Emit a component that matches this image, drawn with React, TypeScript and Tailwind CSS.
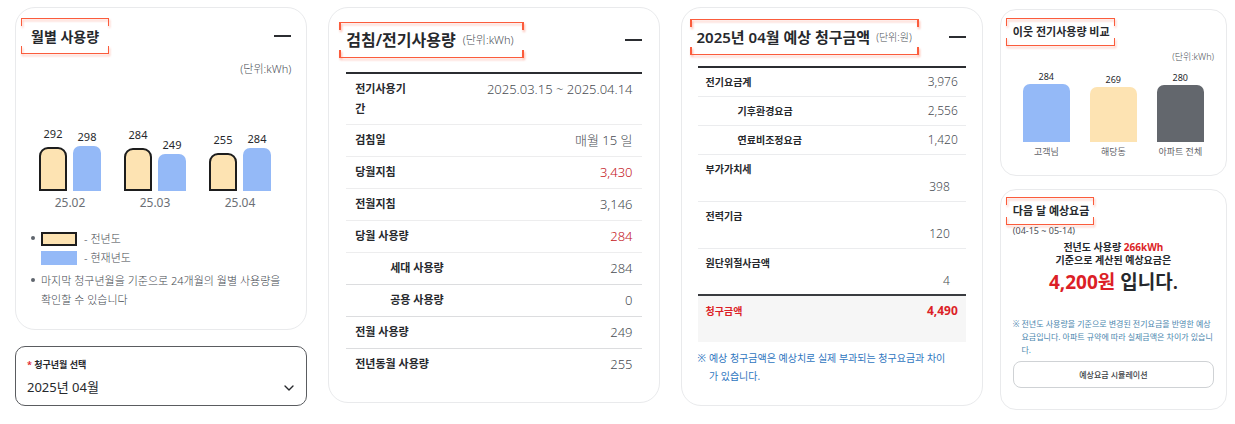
import type { ReactNode } from "react"
import { useState } from "react"
import { ChevronDown } from "lucide-react"
import clsx from "clsx"

const monthly = [
  { month: "25.02", previous: 292, current: 298 },
  { month: "25.03", previous: 284, current: 249 },
  { month: "25.04", previous: 255, current: 284 },
]

const readings = [
  { label: "전기사용기간", value: "2025.03.15 ~ 2025.04.14" },
  { label: "검침일", value: "매월 15 일" },
  { label: "당월지침", value: "3,430", red: true },
  { label: "전월지침", value: "3,146" },
  { label: "당월 사용량", value: "284", red: true },
  { label: "세대 사용량", value: "284", indent: true, strong: true },
  { label: "공용 사용량", value: "0", indent: true, strong: true },
  { label: "전월 사용량", value: "249", strong: true },
  { label: "전년동월 사용량", value: "255" },
]

const charges = [
  { label: "전기요금계", value: "3,976" },
  { label: "기후환경요금", value: "2,556", indent: true },
  { label: "연료비조정요금", value: "1,420", indent: true },
  { label: "부가가치세", value: "398", tall: true },
  { label: "전력기금", value: "120", tall: true },
  { label: "원단위절사금액", value: "4", tall: true },
]

const neighbors = [
  { label: "고객님", value: 284, height: 58, color: "bg-[#94b9f7]" },
  { label: "해당동", value: 269, height: 55, color: "bg-[#fde3b2]" },
  { label: "아파트 전체", value: 280, height: 57, color: "bg-[#63676d]" },
]

function Card({ className, children }: { className?: string; children: ReactNode }) {
  return <section className={clsx("border border-[#e9eaec] bg-white", className)}>{children}</section>
}

// Title with the red corner brackets
function Bracket({ className, thick, children }: { className?: string; thick?: boolean; children: ReactNode }) {
  const side = thick ? "border-x-2" : "border-x"
  return (
    <div className={clsx("relative flex items-center whitespace-nowrap", className)}>
      <span
        className={clsx("absolute inset-x-0 top-0 h-2 border-t border-[#fb5c3c] drop-shadow-[1px_2px_1px_rgba(251,92,60,0.45)]", side)}
      />
      {children}
      <span
        className={clsx("absolute inset-x-0 bottom-0 h-2 border-b border-[#fb5c3c] drop-shadow-[1px_2px_1px_rgba(251,92,60,0.45)]", side)}
      />
    </div>
  )
}

function CollapseButton() {
  return (
    <button type="button" aria-label="접기" className="flex h-5 w-[17px] items-center">
      <span className="h-[2px] w-full bg-[#2b2d31]" />
    </button>
  )
}

function MonthlyUsage() {
  return (
    <Card className="h-[323px] rounded-[20px] pl-[5px] pr-[15px] pt-[10px]">
      <div className="flex items-center justify-between">
        <Bracket className="h-9 px-[10px]">
          <h2 className="text-[14px] font-semibold">월별 사용량</h2>
        </Bracket>
        <CollapseButton />
      </div>
      <p className="mt-[7px] text-right text-[11px] leading-4 font-light text-[#4b4f56]">(단위:kWh)</p>

      <div className="mt-[47px] ml-[18px] flex h-[67px] gap-[23px]">
        {monthly.map((m) => (
          <div key={m.month} className="flex items-end gap-[6px]">
            <div className="flex w-7 flex-col items-center">
              <span className="mb-[5px] text-[11px] leading-4">{m.previous}</span>
              <div
                className="w-full rounded-t-[9px] border-2 border-[#1d1d1d] bg-[#fde3b2]"
                style={{ height: Math.round(m.previous * 0.15) }}
              />
            </div>
            <div className="flex w-7 flex-col items-center">
              <span className="mb-[1px] text-[11px] leading-4">{m.current}</span>
              <div className="w-full rounded-t-[7px] bg-[#94b9f7]" style={{ height: Math.round(m.current * 0.15) }} />
            </div>
          </div>
        ))}
      </div>
      <div className="mt-1 ml-[18px] flex gap-[23px]">
        {monthly.map((m) => (
          <span key={m.month} className="w-[62px] text-center text-[12px] leading-4 text-[#6b6f76]">
            {m.month}
          </span>
        ))}
      </div>

      <ul className="mt-[18px] ml-[10px] text-[11px] leading-[19px] font-light text-[#43484f]">
        <li className="flex">
          <Bullet />
          <div>
            <div className="flex items-center gap-[7px]">
              <span className="h-[14px] w-9 border-2 border-[#1d1d1d] bg-[#fde3b2]" />- 전년도
            </div>
            <div className="flex items-center gap-[7px]">
              <span className="h-[14px] w-9 bg-[#94b9f7]" />- 현재년도
            </div>
          </div>
        </li>
        <li className="mt-1 flex">
          <Bullet />
          <p className="break-keep">마지막 청구년월을 기준으로 24개월의 월별 사용량을 확인할 수 있습니다</p>
        </li>
      </ul>
    </Card>
  )
}

function Bullet() {
  return <span className="mt-[7px] mr-[6px] h-1 w-1 shrink-0 rounded-full bg-[#5f656d]" />
}

function MonthSelect() {
  const [month, setMonth] = useState("2025-04")
  return (
    <div className="relative mt-4 h-[60px] rounded-[10px] border border-[#5a5c60] px-[11px] pt-[10px]">
      <label htmlFor="month" className="block text-[9px] leading-4 font-semibold">
        <span className="text-[#e0222b]">*</span> 청구년월 선택
      </label>
      <select
        id="month"
        value={month}
        onChange={(e) => setMonth(e.target.value)}
        className="mt-1 block w-full appearance-none bg-transparent text-[13px] leading-5 outline-none"
      >
        <option value="2025-04">2025년 04월</option>
        <option value="2025-03">2025년 03월</option>
        <option value="2025-02">2025년 02월</option>
      </select>
      <ChevronDown className="pointer-events-none absolute right-[9px] bottom-[9px]" size={16} strokeWidth={2} />
    </div>
  )
}

function MeterReading() {
  return (
    <Card className="h-[396px] rounded-[20px] px-[17px] pt-[14px]">
      <div className="-ml-[7px] flex items-center justify-between">
        <Bracket thick className="h-9 gap-[7px] pr-[10px] pl-[7px]">
          <h2 className="text-[16px] font-semibold">검침/전기사용량</h2>
          <span className="text-[11px] font-light text-[#4b4f56]">(단위:kWh)</span>
        </Bracket>
        <CollapseButton />
      </div>
      <table className="mt-[14px] w-full border-t-2 border-[#2b2d31]">
        <tbody>
          {readings.map((r, i) => (
            <tr
              key={r.label}
              className={clsx(
                "h-8",
                i < readings.length - 1 && "border-b",
                r.strong ? "border-[#dcdddf]" : "border-[#ededee]",
              )}
            >
              <th
                scope="row"
                className={clsx("py-[5px] text-left align-top text-[11px] leading-5 font-semibold", r.indent ? "pl-[44px]" : "pl-[9px]")}
              >
                <span className={clsx("block", i === 0 && "w-[54px] break-all")}>{r.label}</span>
              </th>
              <td
                className={clsx(
                  "py-[5px] pr-[9px] text-right align-top text-[13px] leading-5 font-light whitespace-nowrap",
                  r.red ? "text-[#c4141c]" : "text-[#484c52]",
                )}
              >
                {r.value}
              </td>
            </tr>
          ))}
        </tbody>
      </table>
    </Card>
  )
}

function ExpectedBill() {
  return (
    <Card className="h-[399px] rounded-[20px] px-4 pt-[11px]">
      <div className="-ml-2 flex items-center justify-between">
        <Bracket thick className="h-9 gap-[6px] px-[7px]">
          <h2 className="text-[15px] font-semibold">2025년 04월 예상 청구금액</h2>
          <span className="text-[10px] font-light text-[#4b4f56]">(단위:원)</span>
        </Bracket>
        <CollapseButton />
      </div>
      <table className="mt-[11px] w-full border-t-2 border-[#2b2d31] leading-[18px]">
        <tbody>
          {charges.map((c) => (
            <tr key={c.label} className={clsx("border-b border-[#ebecee]", c.tall ? "h-[47px]" : "h-[29px]")}>
              <th
                scope="row"
                className={clsx("pt-[5px] text-left align-top text-[10px] font-semibold", c.indent ? "pl-[40px]" : "pl-2")}
              >
                {c.label}
              </th>
              <td
                className={clsx(
                  "text-right align-top text-[12px] font-light text-[#484c52]",
                  c.tall ? "pt-[23px] pr-4" : "pt-[5px] pr-2",
                )}
              >
                {c.value}
              </td>
            </tr>
          ))}
        </tbody>
        <tfoot>
          <tr className="h-[47px] border-t-2 border-[#3a3c40] bg-[#f6f6f6] text-[#dc1f27]">
            <th scope="row" className="pt-[6px] pl-2 text-left align-top text-[10px] font-bold">
              청구금액
            </th>
            <td className="pt-[6px] pr-2 text-right align-top text-[12px] font-bold">4,490</td>
          </tr>
        </tfoot>
      </table>
      <p className="mt-[7px] flex gap-[3px] text-[10px] leading-[18px] text-[#2f76c0]">
        <span>※</span>
        <span>
          예상 청구금액은 예상치로 실제 부과되는 청구요금과 차이
          <br />가 있습니다.
        </span>
      </p>
    </Card>
  )
}

function NeighborComparison() {
  return (
    <Card className="h-[167px] rounded-2xl pt-2 pr-3 pl-[5px]">
      <Bracket className="h-7 w-fit pr-[5px] pl-[7px]">
        <h2 className="text-[11px] font-semibold">이웃 전기사용량 비교</h2>
      </Bracket>
      <p className="mt-[5px] text-right text-[9px] leading-3 font-light text-[#4b4f56]">(단위:kWh)</p>
      <div className="ml-[17px] flex h-[79px] gap-5">
        {neighbors.map((n) => (
          <div key={n.label} className="flex w-[47px] flex-col items-center justify-end">
            <span className="text-[9px] leading-[14px]">{n.value}</span>
            <div className={clsx("w-full rounded-t-[7px]", n.color)} style={{ height: n.height }} />
          </div>
        ))}
      </div>
      <div className="mt-1 ml-[17px] flex gap-5">
        {neighbors.map((n) => (
          <span key={n.label} className="w-[47px] text-center text-[9px] leading-3 whitespace-nowrap text-[#5f6368]">
            {n.label}
          </span>
        ))}
      </div>
    </Card>
  )
}

function NextMonth() {
  return (
    <Card className="mt-[13px] h-[221px] rounded-2xl pt-[7px] pr-3 pl-[5px]">
      <Bracket className="h-7 w-fit pr-[5px] pl-[7px]">
        <h2 className="text-[11px] font-semibold">다음 달 예상요금</h2>
      </Bracket>
      <div className="pl-[7px]">
        <p className="text-[9px] leading-3 text-[#4b4f56]">(04-15 ~ 05-14)</p>
        <p className="mt-1 text-center text-[10px] leading-[13px] font-semibold">
          전년도 사용량 <span className="font-bold text-[#dc1f27]">266kWh</span>
          <br />
          기준으로 계산된 예상요금은
        </p>
        <p className="mt-[2px] text-center text-[19px] leading-[26px] font-semibold">
          <span className="font-bold text-[#dc1f27]">4,200원</span> 입니다.
        </p>
        <p className="mt-[22px] flex gap-[2px] text-[8px] leading-[13px] text-[#4a86ae]">
          <span>※</span>
          <span>
            전년도 사용량을 기준으로 변경된 전기요금을 반영한 예상
            <br />
            요금입니다. 아파트 규약에 따라 실제금액은 차이가 있습니
            <br />
            다.
          </span>
        </p>
        <button
          type="button"
          className="mt-[5px] h-[27px] w-full rounded-lg border border-[#cfd2d5] text-[8px] font-medium text-[#3c3f44]"
        >
          예상요금 시뮬레이션
        </button>
      </div>
    </Card>
  )
}

export default function App() {
  return (
    <main className="flex items-start bg-white pt-[7px] pr-2 pb-3 pl-[15px] font-['Noto_Sans','Noto_Sans_CJK_KR',sans-serif] text-[#26282c]">
      <div className="min-w-0 flex-[292_1_0%]">
        <MonthlyUsage />
        <MonthSelect />
      </div>
      <div className="ml-[21px] min-w-0 flex-[331_1_0%]">
        <MeterReading />
      </div>
      <div className="ml-[21px] min-w-0 flex-[302_1_0%]">
        <ExpectedBill />
      </div>
      <div className="mt-[2px] ml-[17px] min-w-0 flex-[227_1_0%]">
        <NeighborComparison />
        <NextMonth />
      </div>
    </main>
  )
}
